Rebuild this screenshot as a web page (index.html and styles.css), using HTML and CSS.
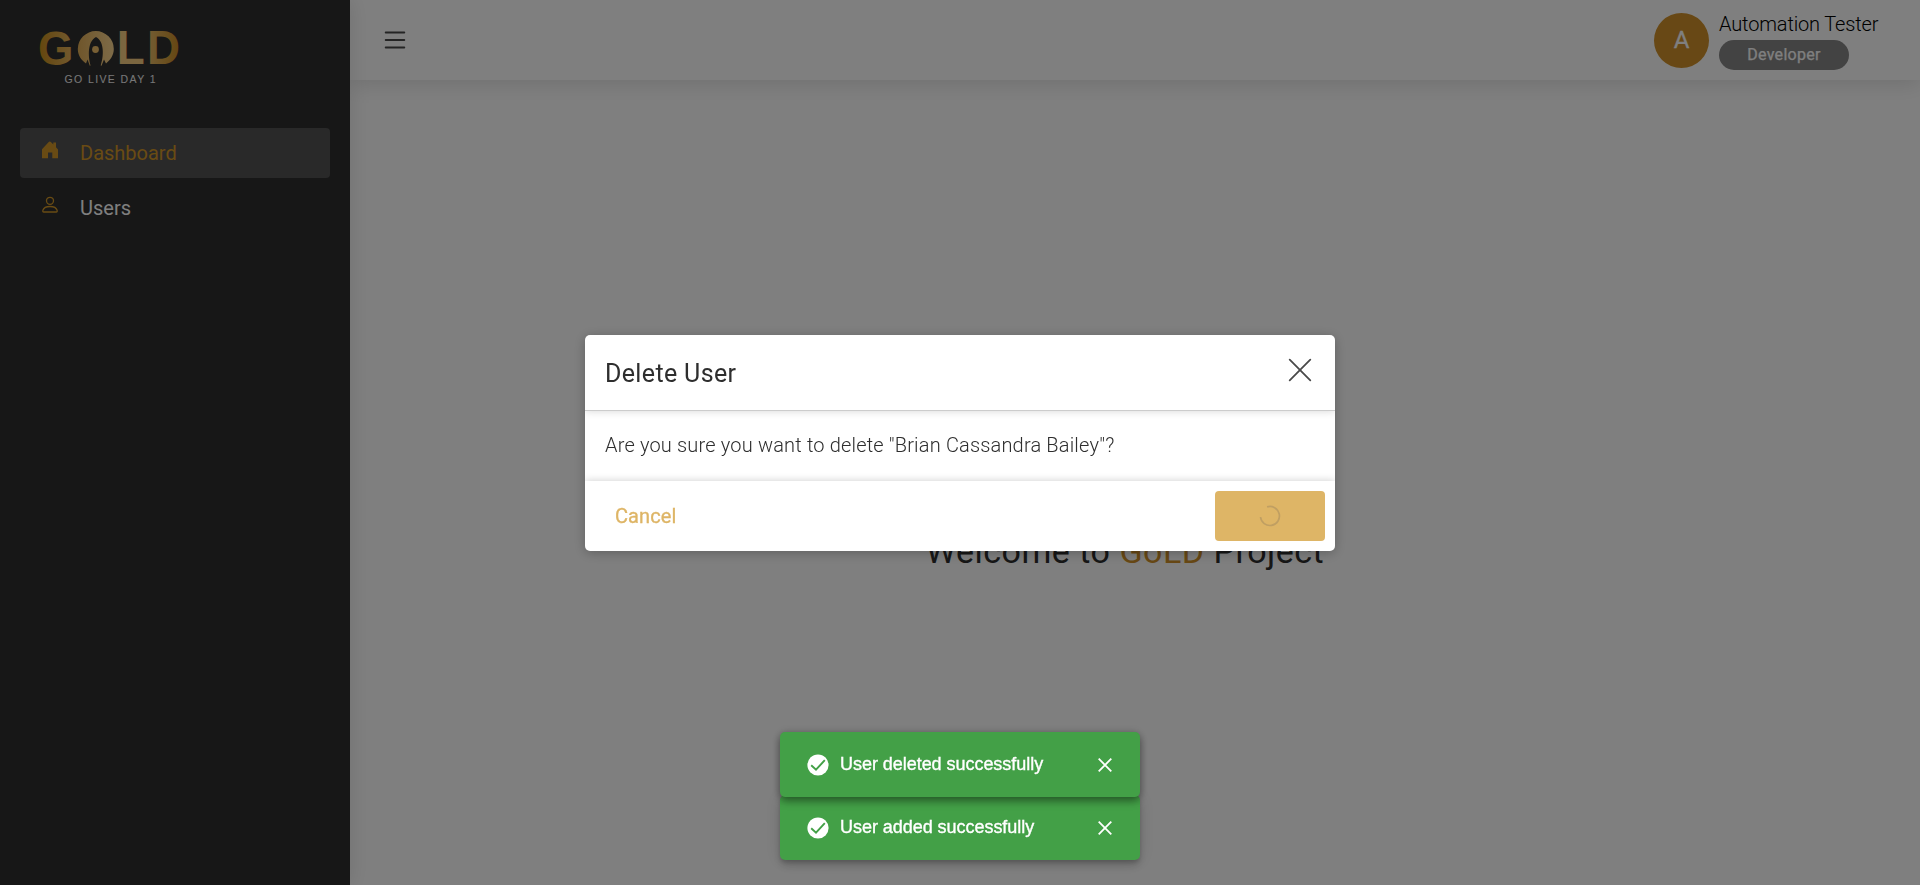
FILE: index.html
```html
<!DOCTYPE html>
<html lang="en">
<head>
<meta charset="utf-8">
<title>GoLD Project</title>
<link rel="stylesheet" href="styles.css">
</head>
<body>
<div class="app">
  <aside class="sidebar">
    <svg class="logo" width="140" height="54" viewBox="0 0 140 54">
      <defs>
        <linearGradient id="goldG" x1="0" y1="0" x2="1" y2="0">
          <stop offset="0" stop-color="#c78a1a"/><stop offset="1" stop-color="#e5b560"/>
        </linearGradient>
        <linearGradient id="goldO" x1="0" y1="0" x2="1" y2="0">
          <stop offset="0" stop-color="#dfac56"/><stop offset="1" stop-color="#fcd690"/>
        </linearGradient>
        <linearGradient id="goldD" x1="0" y1="0" x2="1" y2="0">
          <stop offset="0" stop-color="#e8bb69"/><stop offset="1" stop-color="#c98c22"/>
        </linearGradient>
      </defs>
      <g class="logo-word">
        <text x="-2" y="38.300" fill="url(#goldG)" textLength="35.500" lengthAdjust="spacingAndGlyphs">G</text>
        <text x="76.800" y="37" fill="#f6cc80" textLength="28" lengthAdjust="spacingAndGlyphs">L</text>
        <text x="107" y="37" fill="url(#goldD)" textLength="33" lengthAdjust="spacingAndGlyphs">D</text>
      </g>
      <path fill="url(#goldO)" d="M46 36.500C41 33 37.800 28 37.800 22A18 18 0 0 1 73.800 22C73.800 28 70.500 33 66 36.500L64 32.500L61.500 38.800L60.700 38.500C63.500 30 65 15 56 10C47 15 48.300 30 50.600 38.500L49.800 38.800L47.500 32.500Z"/>
      <circle cx="55.500" cy="22.500" r="3.400" fill="#f0bf68"/>
      <text class="logo-tag" x="24.500" y="55.500" textLength="91" lengthAdjust="spacing">GO LIVE DAY 1</text>
    </svg>
    <nav class="nav">
      <a class="nav-item active">
        <svg width="18" height="19" viewBox="0 0 18 19"><path fill="currentColor" d="M1 9.200 7.500 2.200Q8.800.700 10.100 2.200L12.300 4.500V2.500H15V7.300L17 9.400V18.200H11.300V12.500H7V18.200H1Z"/></svg>
        <span>Dashboard</span>
      </a>
      <a class="nav-item">
        <svg width="18" height="19" viewBox="0 0 18 19" fill="none" stroke="currentColor" stroke-width="1.300"><circle cx="9" cy="5.800" r="3.500"/><path d="M2.800 17Q1.500 17 1.900 15.300C2.700 12.600 5.500 11.500 9 11.500S15.300 12.600 16.100 15.300Q16.500 17 15.200 17Z"/></svg>
        <span class="t-users">Users</span>
      </a>
    </nav>
  </aside>
  <div class="page">
    <header class="topbar">
      <svg width="22" height="18" viewBox="0 0 22 18" stroke="#484848" stroke-width="1.900" stroke-linecap="round"><path d="M1.700 1.500H20.300M1.700 9H20.300M1.700 16.500H20.300"/></svg>
      <div class="user">
        <div class="avatar"><span>A</span></div>
        <div class="user-info">
          <div class="user-name">Automation Tester</div>
          <div class="role">Developer</div>
        </div>
      </div>
    </header>
    <main class="welcome"><h1>Welcome to <span>GoLD</span> Project</h1></main>
  </div>
</div>

<div class="overlay">
  <section class="modal">
    <header class="modal-head">
      <h2>Delete User</h2>
      <svg width="24" height="24" viewBox="0 0 24 24" stroke="#4a4a4a" stroke-width="1.800" stroke-linecap="round"><path d="M1.700 1.700 22.300 22.300M22.300 1.700 1.700 22.300"/></svg>
    </header>
    <div class="modal-body"><span>Are you sure you want to delete "Brian Cassandra Bailey"?</span></div>
    <footer class="modal-foot">
      <span class="cancel">Cancel</span>
      <button class="confirm" disabled>
        <svg width="22" height="22" viewBox="0 0 22 22" fill="none" stroke="#c09f62" stroke-width="1.700"><path d="M8.100 1.900A9.500 9.500 0 1 1 1.500 12"/></svg>
      </button>
    </footer>
  </section>
</div>

<div class="toasts">
  <div class="toast front">
    <svg width="22" height="22" viewBox="0 0 22 22"><circle cx="11" cy="11" r="10.600" fill="#fff"/><path d="M4.200 11.200 9 15.600 17.800 6.200" fill="none" stroke="#43a047" stroke-width="1.900"/></svg>
    <span>User deleted successfully</span>
    <svg class="x" width="14" height="14" viewBox="0 0 14 14" stroke="#fff" stroke-width="1.800"><path d="M.700.700 13.300 13.300M13.300.700.700 13.300"/></svg>
  </div>
  <div class="toast">
    <svg width="22" height="22" viewBox="0 0 22 22"><circle cx="11" cy="11" r="10.600" fill="#fff"/><path d="M4.200 11.200 9 15.600 17.800 6.200" fill="none" stroke="#43a047" stroke-width="1.900"/></svg>
    <span>User added successfully</span>
    <svg class="x" width="14" height="14" viewBox="0 0 14 14" stroke="#fff" stroke-width="1.800"><path d="M.700.700 13.300 13.300M13.300.700.700 13.300"/></svg>
  </div>
</div>
</body>
</html>
```
FILE: styles.css
```css
* { box-sizing: border-box; }
body { margin: 0; height: 885px; overflow: hidden; background: #fff; font-family: Roboto, "Open Sans", sans-serif; color: #2e2e2e; }
svg { display: block; flex: none; }
h1, h2 { margin: 0; font-weight: 400; }
.app { display: flex; height: 885px; }
.sidebar { width: 350px; background: #2e2e2e; padding: 27px 20px 0; box-shadow: 0 0 20px rgba(0,0,0,.12); z-index: 2; }
.logo { margin-left: 20px; overflow: visible; }
.logo-word { font: 700 48.5px "Liberation Sans", Arial, sans-serif; }
.logo-tag { font: 400 10.5px "Liberation Sans", Arial, sans-serif; fill: #eee; }
.nav { display: flex; flex-direction: column; gap: 5px; margin-top: 47px; color: #d29728; }
.nav-item { display: flex; align-items: center; gap: 20px; height: 50px; padding-left: 21px; border-radius: 4px; font-size: 20px; }
.nav-item svg { margin-top: -8px; }
.nav-item span { margin-top: -1px; margin-left: 1px; }
.nav-item.active { background: #525252; }
.t-users { color: #fff; }
.page { flex: 1; display: flex; flex-direction: column; }
.topbar { height: 80px; display: flex; align-items: center; justify-content: space-between; padding: 0 41px 0 34px; box-shadow: 0 4px 20px rgba(0,0,0,.12); }
.user { display: flex; gap: 10px; align-items: center; }
.avatar { width: 55px; height: 55px; border-radius: 50%; background: #d0912a; color: #fff; font-size: 24px; -webkit-text-stroke: .3px #fff; display: grid; place-items: center; margin-top: 1px; }
.avatar span { margin-top: -2px; }
.user-info { width: 160px; }
.user-name { font-weight: 300; font-size: 20px; line-height: 27px; letter-spacing: -.15px; color: #000; white-space: nowrap; height: 28px; margin-top: 1px; }
.role { width: 130px; height: 30px; margin-top: 1px; padding-bottom: 1px; border-radius: 15px; background: #868686; color: #fff; font-size: 16px; letter-spacing: .3px; -webkit-text-stroke: .25px #fff; display: grid; place-items: center; }
.welcome { flex: 1; display: grid; place-items: center; }
.welcome h1 { font-size: 34px; letter-spacing: .5px; margin-top: 136px; margin-left: -20px; white-space: nowrap; }
.welcome h1 span { color: #d0912a; }
.overlay { position: fixed; inset: 0; z-index: 5; background: rgba(0,0,0,.5); display: flex; align-items: center; justify-content: center; }
.modal { width: 750px; height: 216px; background: #fff; border-radius: 5px; overflow: hidden; box-shadow: 0 2px 12px rgba(0,0,0,.25); display: flex; flex-direction: column; }
.modal-head { height: 76px; border-bottom: 1px solid #ccc; display: flex; align-items: center; justify-content: space-between; padding: 0 23px 0 20px; box-shadow: 0 0 8px rgba(0,0,0,.17); }
.modal-head h2 { font-size: 25px; letter-spacing: .35px; margin-top: 2px; }
.modal-head svg { margin-top: -5px; }
.modal-body { height: 70px; display: flex; align-items: center; padding: 0 20px 1px; font-size: 20px; font-weight: 300; letter-spacing: .17px; }
.modal-foot { height: 70px; display: flex; align-items: center; justify-content: space-between; padding: 0 10px 0 30px; box-shadow: 0 0 8px rgba(0,0,0,.2); }
.cancel { color: #deb566; font-size: 20px; -webkit-text-stroke: .3px #deb566; letter-spacing: .1px; }
.confirm { width: 110px; height: 50px; border: 0; border-radius: 4px; background: #deb566; display: grid; place-items: center; padding: 0; }
.toasts { position: fixed; z-index: 10; left: 780px; top: 732px; width: 360px; display: flex; flex-direction: column; }
.toast { height: 65px; margin-top: -2px; background: #43a047; border-radius: 5px; color: #fff; display: flex; align-items: center; padding: 0 28px 0 27px; font: 400 18px "Liberation Sans", Arial, sans-serif; letter-spacing: -.04px; -webkit-text-stroke: .35px #fff; box-shadow: 0 3px 5px -1px rgba(0,0,0,.2), 0 6px 10px rgba(0,0,0,.14), 0 1px 18px rgba(0,0,0,.12); }
.toast.front { margin-top: 0; position: relative; z-index: 1; box-shadow: 0 4px 8px rgba(0,0,0,.4), 0 0 10px rgba(0,0,0,.15); }
.toast span { margin-left: 11px; white-space: nowrap; }
.toast .x { margin-left: auto; }
```
